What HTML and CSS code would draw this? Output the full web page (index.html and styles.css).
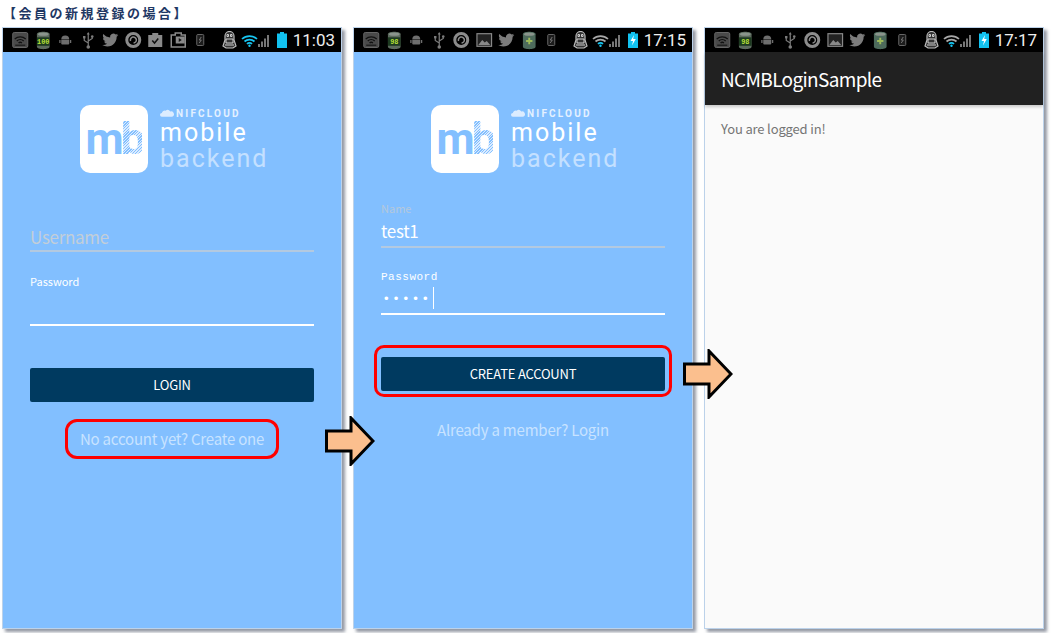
FILE: index.html
```html
<!DOCTYPE html>
<html lang="ja">
<head>
    <meta charset="utf-8">
    <title>会員の新規登録の場合</title>
    <link rel="stylesheet" href="styles.css">
</head>
<body>
    <!-- status bar icons, reused on each phone -->
    <svg class="defs">
        <symbol id="i-box" viewBox="0 0 16 16">
            <rect x="0.5" y="0.5" width="15" height="15" rx="1.5" fill="#4a4a4a" stroke="#666"/>
            <path d="M2.5 7a8 8 0 0 1 11 0M4.5 9a5 5 0 0 1 7 0M6.3 11a2.5 2.5 0 0 1 3.4 0" fill="none" stroke="#111" stroke-width="1.3"/>
            <rect x="3" y="12.5" width="10" height="1.5" fill="#222"/>
        </symbol>
        <symbol id="i-can100" viewBox="0 0 14 18">
            <path d="M1 3c0-3 12-3 12 0v12c0 3-12 3-12 0z" fill="#5c6a5e"/>
            <ellipse cx="7" cy="3" rx="5" ry="1.6" fill="#8a948c"/>
            <rect x="1" y="6" width="12" height="8" fill="#1d3a20"/>
            <text x="7" y="12.6" class="can-text">100</text>
        </symbol>
        <symbol id="i-can98" viewBox="0 0 14 18">
            <path d="M1 3c0-3 12-3 12 0v12c0 3-12 3-12 0z" fill="#5c6a5e"/>
            <ellipse cx="7" cy="3" rx="5" ry="1.6" fill="#8a948c"/>
            <rect x="1" y="6" width="12" height="8" fill="#1d3a20"/>
            <text x="7" y="12.6" class="can-text">98</text>
        </symbol>
        <symbol id="i-android" viewBox="0 0 12 10">
            <path d="M2 4.5a4 4 0 0 1 8 0zM2 5h8v3.5a1 1 0 0 1-1 1H3a1 1 0 0 1-1-1zM0 5h1.3v3H0zM10.7 5H12v3h-1.300z" fill="#6e6e6e"/>
        </symbol>
        <symbol id="i-usb" viewBox="0 0 12 17">
            <path d="M6 1v15M6 11 2 8.500V6M6 9l4-2.500V5" fill="none" stroke="#7c7c7c" stroke-width="1.200"/>
            <circle cx="6" cy="15" r="1.800" fill="#7c7c7c"/>
            <rect x="0.800" y="4" width="2.400" height="2.400" fill="#7c7c7c"/>
            <circle cx="10" cy="4.500" r="1.300" fill="#7c7c7c"/>
            <path d="M6 0 4.500 2.500h3z" fill="#7c7c7c"/>
        </symbol>
        <symbol id="i-twitter" viewBox="0 0 24 24">
            <path d="M23.953 4.57a10 10 0 01-2.825.775 4.958 4.958 0 002.163-2.723c-.951.555-2.005.959-3.127 1.184a4.92 4.92 0 00-8.384 4.482C7.69 8.095 4.067 6.13 1.64 3.162a4.822 4.822 0 00-.666 2.475c0 1.71.87 3.213 2.188 4.096a4.904 4.904 0 01-2.228-.616v.06a4.923 4.923 0 003.946 4.827 4.996 4.996 0 01-2.212.085 4.936 4.936 0 004.604 3.417 9.867 9.867 0 01-6.102 2.105c-.39 0-.779-.023-1.17-.067a13.995 13.995 0 007.557 2.209c9.053 0 13.998-7.496 13.998-13.985 0-.21 0-.42-.015-.63A9.935 9.935 0 0024 4.59z" fill="#7c7c7c"/>
        </symbol>
        <symbol id="i-ring" viewBox="0 0 16 16">
            <circle cx="8" cy="8" r="6.500" fill="none" stroke="#8c8c8c" stroke-width="3"/>
            <path d="M5.300 9a3 3 0 1 1 3 2" fill="none" stroke="#8c8c8c" stroke-width="1.500"/>
        </symbol>
        <symbol id="i-bagcheck" viewBox="0 0 16 16">
            <path d="M5 3V1h6v2h4v12H1V3z" fill="#8a8a8a"/>
            <path d="M5 8.500 7.300 11 11 6.500" fill="none" stroke="#111" stroke-width="1.500"/>
        </symbol>
        <symbol id="i-bagplay" viewBox="0 0 16 16">
            <path d="M5 3V1h6v2h4v12H1V3z" fill="none" stroke="#8a8a8a" stroke-width="1.500"/>
            <path d="M5.500 4.500h9v7h-9z" fill="#8a8a8a"/>
            <path d="M8.500 6v4l3-2z" fill="#111"/>
        </symbol>
        <symbol id="i-image" viewBox="0 0 16 16">
            <rect x="0.700" y="1.700" width="14.600" height="12.600" fill="#222" stroke="#888" stroke-width="1.200"/>
            <path d="M2 13 6 8l2.500 2.500 2-1.500L14 13z" fill="#888"/>
        </symbol>
        <symbol id="i-trash" viewBox="0 0 14 18">
            <path d="M1 3c0-3 12-3 12 0v12c0 3-12 3-12 0z" fill="#4d6b5c"/>
            <ellipse cx="7" cy="3" rx="5" ry="1.600" fill="#8a948c"/>
            <path d="M7 6.500v6M4 9.500h6" stroke="#9dbb5a" stroke-width="1.800"/>
        </symbol>
        <symbol id="i-phone" viewBox="0 0 8 12">
            <rect x="0.500" y="0.500" width="7" height="11" rx="1" fill="#1c1c1c" stroke="#666"/>
            <path d="M5 3 3 6h2l-2 3" fill="none" stroke="#777"/>
        </symbol>
        <symbol id="i-robot" viewBox="0 0 15 18">
            <path d="M3 5a4.500 4.500 0 0 1 9 0v4l2 6-3 2H4l-3-2 2-6z" fill="#333" stroke="#bdbdbd" stroke-width="1.200"/>
            <path d="M4 8h7v4H4zM5 3.500h1.500v2H5zM8.500 3.500H10v2H8.500zM3 14h9" fill="none" stroke="#d0d0d0"/>
        </symbol>
        <symbol id="i-wifi-blue" viewBox="0 0 17 13">
            <path d="M1 5a11 11 0 0 1 15 0M3.500 7.500a7.500 7.500 0 0 1 10 0M6 10a3.500 3.500 0 0 1 5 0" fill="none" stroke="#17c6f2" stroke-width="1.700"/>
            <circle cx="8.500" cy="11.800" r="1.200" fill="#17c6f2"/>
        </symbol>
        <symbol id="i-wifi-part" viewBox="0 0 17 13">
            <path d="M1 5a11 11 0 0 1 15 0M3.500 7.500a7.500 7.500 0 0 1 10 0" fill="none" stroke="#a8a8a8" stroke-width="1.700"/>
            <path d="M6 10a3.500 3.500 0 0 1 5 0" fill="none" stroke="#17c6f2" stroke-width="1.700"/>
            <circle cx="8.500" cy="11.800" r="1.200" fill="#17c6f2"/>
        </symbol>
        <symbol id="i-signal" viewBox="0 0 11 13">
            <path d="M0 10h2v3H0zM3 7.500h2V13H3zM6 4.500h2V13H6zM9 1h2v12H9z" fill="#777"/>
        </symbol>
        <symbol id="i-batt" viewBox="0 0 10 16">
            <path d="M3 0h4v1.500h3V16H0V1.500h3z" fill="#12c2f0"/>
        </symbol>
        <symbol id="i-charge" viewBox="0 0 10 16">
            <path d="M3 0h4v1.500h3V16H0V1.500h3z" fill="#12c2f0"/>
            <path d="M6 3 2.500 9H5l-1 4.500L7.800 7H5.200z" fill="#fff"/>
        </symbol>
    </svg>

    <h1 class="heading">【会員の新規登録の場合】</h1>

    <div class="screens">
        <section class="phone phone-blue">
            <div class="status">
                <svg class="ico ico-box"><use href="#i-box"/></svg>
                <svg class="ico ico-can"><use href="#i-can100"/></svg>
                <svg class="ico ico-android"><use href="#i-android"/></svg>
                <svg class="ico ico-usb"><use href="#i-usb"/></svg>
                <svg class="ico ico-box"><use href="#i-twitter"/></svg>
                <svg class="ico ico-box"><use href="#i-ring"/></svg>
                <svg class="ico ico-box"><use href="#i-bagcheck"/></svg>
                <svg class="ico ico-box"><use href="#i-bagplay"/></svg>
                <svg class="ico ico-phone"><use href="#i-phone"/></svg>
                <div class="status-right">
                    <svg class="robot"><use href="#i-robot"/></svg>
                    <svg class="wifi"><use href="#i-wifi-blue"/></svg>
                    <svg class="signal"><use href="#i-signal"/></svg>
                    <svg class="batt"><use href="#i-batt"/></svg>
                    <span class="clock">11:03</span>
                </div>
            </div>
            <div class="logo">
                <div class="logo-mark"><span class="mark-m">m</span><span class="mark-b">b</span></div>
                <div class="logo-words">
                    <div class="logo-nif">
                        <svg class="cloud" viewBox="0 0 15 8"><path d="M2 8a2 2 0 0 1 0-4 3 3 0 0 1 4-2.500 3.500 3.500 0 0 1 5 1 2.700 2.700 0 0 1 2 5.500z" fill="#dcecff"/></svg>
                        NIFCLOUD
                    </div>
                    <div class="logo-mobile">mobile</div>
                    <div class="logo-backend">backend</div>
                </div>
            </div>
            <div class="form form-login">
                <div class="placeholder">Username</div>
                <div class="line line-dim"></div>
                <div class="label label-login">Password</div>
                <div class="line line-bright line-pass"></div>
                <div class="btn btn-login">LOGIN</div>
                <div class="link-row"><span class="link link-marked">No account yet? Create one</span></div>
            </div>
        </section>

        <section class="phone phone-blue">
            <div class="status">
                <svg class="ico ico-box"><use href="#i-box"/></svg>
                <svg class="ico ico-can"><use href="#i-can98"/></svg>
                <svg class="ico ico-android"><use href="#i-android"/></svg>
                <svg class="ico ico-usb"><use href="#i-usb"/></svg>
                <svg class="ico ico-box"><use href="#i-ring"/></svg>
                <svg class="ico ico-box"><use href="#i-image"/></svg>
                <svg class="ico ico-box"><use href="#i-twitter"/></svg>
                <svg class="ico ico-can"><use href="#i-trash"/></svg>
                <svg class="ico ico-phone"><use href="#i-phone"/></svg>
                <div class="status-right">
                    <svg class="robot"><use href="#i-robot"/></svg>
                    <svg class="wifi"><use href="#i-wifi-part"/></svg>
                    <svg class="signal"><use href="#i-signal"/></svg>
                    <svg class="batt"><use href="#i-charge"/></svg>
                    <span class="clock">17:15</span>
                </div>
            </div>
            <div class="logo">
                <div class="logo-mark"><span class="mark-m">m</span><span class="mark-b">b</span></div>
                <div class="logo-words">
                    <div class="logo-nif">
                        <svg class="cloud" viewBox="0 0 15 8"><path d="M2 8a2 2 0 0 1 0-4 3 3 0 0 1 4-2.500 3.500 3.500 0 0 1 5 1 2.700 2.700 0 0 1 2 5.500z" fill="#dcecff"/></svg>
                        NIFCLOUD
                    </div>
                    <div class="logo-mobile">mobile</div>
                    <div class="logo-backend">backend</div>
                </div>
            </div>
            <div class="form form-signup">
                <div class="label label-name">Name</div>
                <div class="value">test1</div>
                <div class="line line-dim"></div>
                <div class="label label-mono">Password</div>
                <div class="dots">•••••<span class="caret"></span></div>
                <div class="line line-bright"></div>
                <div class="btn-mark"><div class="btn">CREATE ACCOUNT</div></div>
                <div class="link-row link-row-signup"><span class="link">Already a member? Login</span></div>
            </div>
        </section>

        <section class="phone phone-white">
            <div class="status">
                <svg class="ico ico-box"><use href="#i-box"/></svg>
                <svg class="ico ico-can"><use href="#i-can98"/></svg>
                <svg class="ico ico-android"><use href="#i-android"/></svg>
                <svg class="ico ico-usb"><use href="#i-usb"/></svg>
                <svg class="ico ico-box"><use href="#i-ring"/></svg>
                <svg class="ico ico-box"><use href="#i-image"/></svg>
                <svg class="ico ico-box"><use href="#i-twitter"/></svg>
                <svg class="ico ico-can"><use href="#i-trash"/></svg>
                <svg class="ico ico-phone"><use href="#i-phone"/></svg>
                <div class="status-right">
                    <svg class="robot"><use href="#i-robot"/></svg>
                    <svg class="wifi"><use href="#i-wifi-part"/></svg>
                    <svg class="signal"><use href="#i-signal"/></svg>
                    <svg class="batt"><use href="#i-charge"/></svg>
                    <span class="clock">17:17</span>
                </div>
            </div>
            <div class="appbar">NCMBLoginSample</div>
            <p class="logged">You are logged in!</p>
        </section>
    </div>

    <!-- arrows between the phones -->
    <svg class="arrow arrow-one" viewBox="0 0 50 50"><path d="M1.500 15H26V2l22 23-22 23V35H1.500z" fill="#fbbf8e" stroke="#000" stroke-width="3"/></svg>
    <svg class="arrow arrow-two" viewBox="0 0 50 50"><path d="M1.500 15H26V2l22 23-22 23V35H1.500z" fill="#fbbf8e" stroke="#000" stroke-width="3"/></svg>
</body>
</html>
```

FILE: styles.css
```css
html, body {
    margin: 0;
    padding: 0;
    height: 633px;
    overflow: hidden;
    background-color: #fff;
}
body {
    position: relative;
    font-family: "Noto Sans CJK JP", "Noto Sans", sans-serif;
}
.defs {
    display: none;
}
.can-text {
    font-family: "Liberation Mono", monospace;
    font-size: 6.500px;
    font-weight: bold;
    fill: #b7e03a;
    text-anchor: middle;
}
.heading {
    margin: 0;
    padding: 4px 0 0 3px;
    height: 28px;
    box-sizing: border-box;
    font-family: "Noto Sans CJK JP", sans-serif;
    font-size: 13px;
    line-height: 18px;
    font-weight: bold;
    letter-spacing: 2.500px;
    color: #1f3864;
}
.screens {
    display: grid;
    grid-template-columns: repeat(3, 338px);
    column-gap: 13px;
    padding-left: 3px;
}
.phone {
    height: 600px;
    box-shadow: 0 0 0 1px #bcd2ea, 3px 3px 3px 1px rgba(60, 70, 90, 0.55);
}
.phone-blue {
    background-color: #82bfff;
}
.phone-white {
    background-color: #fafafa;
}

/* status bar */
.status {
    display: flex;
    align-items: center;
    height: 24px;
    padding: 0 6px;
    background-color: #000;
}
.ico {
    flex: 0 0 22.500px;
}
.ico-box {
    height: 16px;
}
.ico-can {
    height: 19px;
}
.ico-android {
    height: 10px;
}
.ico-usb {
    height: 17px;
}
.ico-phone {
    height: 12px;
}
.status-right {
    display: flex;
    align-items: center;
    margin-left: auto;
}
.robot {
    width: 15px;
    height: 18px;
    margin-right: 4px;
}
.wifi {
    width: 17px;
    height: 13px;
}
.signal {
    width: 11px;
    height: 13px;
    margin-right: 8px;
}
.batt {
    width: 10px;
    height: 16px;
    margin-right: 6px;
}
.clock {
    font-family: Roboto, sans-serif;
    font-size: 17px;
    line-height: 20px;
    color: #eee;
}

/* logo */
.logo {
    display: flex;
    gap: 12px;
    padding: 53px 0 0 77px;
}
.logo-mark {
    display: flex;
    justify-content: center;
    width: 68px;
    height: 68px;
    border-radius: 10px;
    background-color: #fff;
    font-family: Roboto, sans-serif;
    font-weight: bold;
    font-size: 44px;
    line-height: 68px;
    letter-spacing: -3px;
}
.mark-m {
    color: #82bfff;
}
.mark-b {
    color: transparent;
    background: repeating-linear-gradient(135deg, #82bfff 0 1px, #dcecff 1px 2px);
    -webkit-background-clip: text;
    background-clip: text;
}
.logo-words {
    width: 120px;
    font-family: Roboto, sans-serif;
    color: #fff;
}
.logo-nif {
    display: flex;
    align-items: center;
    gap: 2px;
    height: 14px;
    margin-top: 1px;
    font-size: 10px;
    font-weight: bold;
    letter-spacing: 2.200px;
    color: #e4f1ff;
}
.cloud {
    width: 14px;
    height: 8px;
}
.logo-mobile {
    font-size: 25px;
    line-height: 25px;
    letter-spacing: 2px;
}
.logo-backend {
    font-size: 25px;
    line-height: 28px;
    letter-spacing: 2px;
    color: #c4e0ff;
}

/* forms */
.form {
    padding: 0 27px;
}
.form-login {
    padding-top: 51px;
}
.form-signup {
    padding-top: 27px;
}
.placeholder {
    font-size: 17px;
    line-height: 26px;
    letter-spacing: -0.300px;
    color: #c3ced8;
}
.line {
    height: 2px;
}
.line-dim {
    background-color: #b3c9e0;
}
.line-bright {
    background-color: #fff;
}
.line-pass {
    margin-top: 35px;
}
.label {
    font-size: 11px;
    line-height: 16px;
    color: #fff;
}
.label-login {
    margin-top: 21px;
}
.label-name {
    font-size: 11px;
    color: #b4c8dc;
}
.label-mono {
    margin-top: 21px;
    font-family: "Liberation Mono", monospace;
    font-size: 11px;
    letter-spacing: 0.500px;
}
.value {
    font-size: 17px;
    line-height: 30px;
    letter-spacing: -0.300px;
    color: #fff;
}
.dots {
    display: flex;
    align-items: center;
    height: 26px;
    padding-left: 3px;
    margin-bottom: 2px;
    font-family: "Liberation Sans", sans-serif;
    font-size: 13px;
    letter-spacing: 5.200px;
    color: #fff;
}
.caret {
    width: 1.500px;
    height: 22px;
    background-color: #fff;
}
.btn {
    height: 34px;
    border-radius: 2px;
    background-color: #003a60;
    color: #fff;
    font-size: 13px;
    letter-spacing: -0.200px;
    line-height: 34px;
    text-align: center;
}
.btn-login {
    margin-top: 42px;
}
.btn-mark {
    margin: 30px -7px 0;
    padding: 9px 4px 3px;
    border: 3px solid #f00;
    border-radius: 10px;
}
.link-row {
    display: flex;
    justify-content: center;
    margin-top: 17px;
}
.link-row-signup {
    margin-top: 22px;
}
.link {
    font-size: 15px;
    letter-spacing: -0.200px;
    line-height: 22px;
    color: #c8e3ff;
}
.link-marked {
    padding: 6px 12px;
    border: 3px solid #f00;
    border-radius: 12px;
}

/* logged in screen */
.appbar {
    height: 53px;
    padding-left: 16px;
    background-color: #212121;
    box-shadow: 0 2px 3px rgba(0, 0, 0, 0.2);
    color: #fff;
    font-size: 19px;
    letter-spacing: -0.650px;
    line-height: 53px;
}
.logged {
    margin: 14px 0 0;
    padding-left: 16px;
    font-size: 13px;
    letter-spacing: -0.150px;
    line-height: 20px;
    color: #757575;
}

/* arrows sit over the gaps between the phones */
.arrow {
    position: absolute;
    width: 50px;
    height: 50px;
}
.arrow-one {
    left: 325px;
    top: 416px;
}
.arrow-two {
    left: 683px;
    top: 349px;
}
```
